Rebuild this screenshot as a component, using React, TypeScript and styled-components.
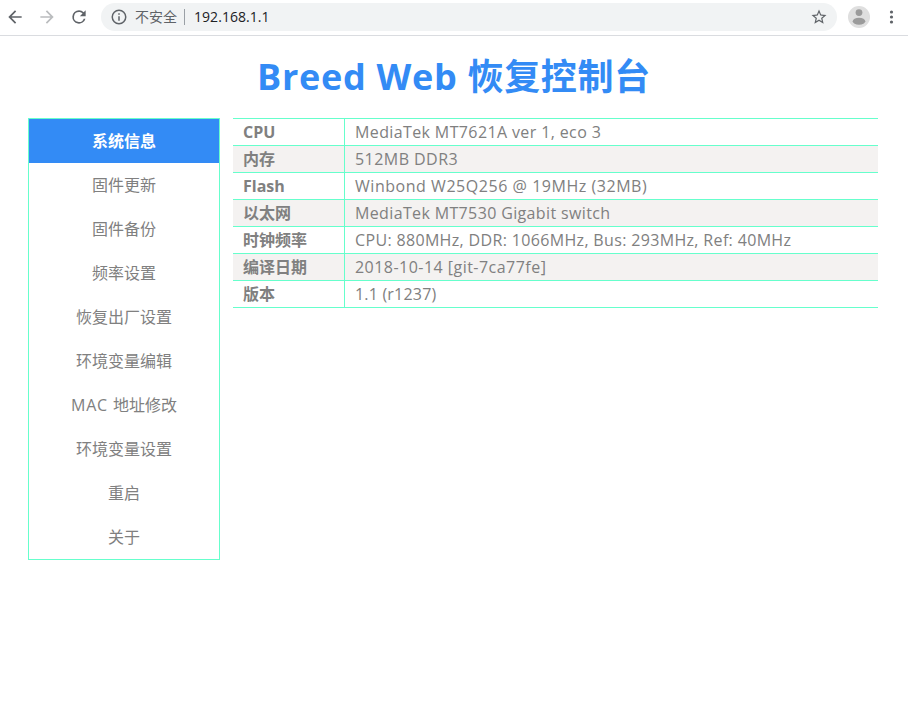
import React from "react";
import styled, { createGlobalStyle } from "styled-components";

const GlobalStyle = createGlobalStyle`
  * { box-sizing: border-box; }
  body {
    margin: 0;
    background: #fff;
    color: #808080;
    font-family: "Open Sans", "Noto Sans CJK SC", sans-serif;
    font-size: 16px;
  }
`;

const Page = styled.div`
  height: 721px;
  overflow: hidden;
`;

const Toolbar = styled.header`
  display: flex;
  align-items: center;
  height: 36px;
  padding: 0 8px 2px 5px;
  border-bottom: 1px solid #dadce0;
`;

const NavButton = styled.button<{ $muted?: boolean }>`
  display: flex;
  width: 20px;
  height: 20px;
  margin-right: 12px;
  padding: 0;
  border: 0;
  background: none;
  color: ${(p) => (p.$muted ? "#babcbe" : "#5f6368")};
`;

const AddressBar = styled.div`
  display: flex;
  align-items: center;
  flex: 1;
  height: 28px;
  padding: 0 9px 0 9px;
  border-radius: 14px;
  background: #f1f3f4;
  font-size: 14px;
  color: #5f6368;
`;

const Security = styled.span`
  width: 42px;
  margin-left: 7px;
  line-height: 20px;
`;

const Divider = styled.span`
  width: 1px;
  height: 16px;
  margin: 0 9px 0 7px;
  background: #9aa0a6;
`;

const Address = styled.span`
  flex: 1;
  color: #202124;
  line-height: 20px;
  letter-spacing: 0.05px;
`;

const Profile = styled.svg`
  margin: 0 12px 0 11px;
`;

const Title = styled.h1`
  margin: 0;
  height: 82px;
  padding-top: 9px;
  text-align: center;
  color: #338bf5;
  font-size: 36px;
  line-height: 64px;
  font-weight: 700;
  letter-spacing: 0.7px;
`;

const Content = styled.main`
  display: flex;
  align-items: flex-start;
  gap: 13px;
  padding: 0 30px 0 28px;
`;

const Menu = styled.nav`
  display: flex;
  flex-direction: column;
  width: 192px;
  border: 1px solid #66ffcc;
`;

const MenuItem = styled.a<{ $active?: boolean }>`
  height: 44px;
  line-height: 44px;
  text-align: center;
  background: ${(p) => (p.$active ? "#338bf5" : "transparent")};
  color: ${(p) => (p.$active ? "#fff" : "inherit")};
  font-weight: ${(p) => (p.$active ? 700 : 400)};
`;

const Acronym = styled.span`
  letter-spacing: 0.8px;
`;

const InfoTable = styled.div`
  flex: 1;
  border-top: 1px solid #66ffcc;
`;

const Row = styled.div`
  display: grid;
  grid-template-columns: 112px 1fr;
  height: 27px;
  border-bottom: 1px solid #66ffcc;
  line-height: 26px;
  white-space: nowrap;
  &:nth-child(even) { background: #f4f2f1; }
`;

const Label = styled.div`
  padding-left: 10px;
  border-right: 1px solid #66ffcc;
  font-weight: 700;
`;

const Value = styled.div<{ $tracking: number }>`
  padding-left: 10px;
  letter-spacing: ${(p) => p.$tracking}px;
`;

const menu: { id: string; label: React.ReactNode }[] = [
  { id: "info", label: "系统信息" },
  { id: "upgrade", label: "固件更新" },
  { id: "backup", label: "固件备份" },
  { id: "frequency", label: "频率设置" },
  { id: "reset", label: "恢复出厂设置" },
  { id: "env-edit", label: "环境变量编辑" },
  { id: "mac", label: <><Acronym>MAC </Acronym>地址修改</> },
  { id: "env-settings", label: "环境变量设置" },
  { id: "reboot", label: "重启" },
  { id: "about", label: "关于" },
];

const rows: { label: string; value: string; tracking: number }[] = [
  { label: "CPU", value: "MediaTek MT7621A ver 1, eco 3", tracking: 0.38 },
  { label: "内存", value: "512MB DDR3", tracking: 0.45 },
  { label: "Flash", value: "Winbond W25Q256 @ 19MHz (32MB)", tracking: 0.54 },
  { label: "以太网", value: "MediaTek MT7530 Gigabit switch", tracking: 0.36 },
  { label: "时钟频率", value: "CPU: 880MHz, DDR: 1066MHz, Bus: 293MHz, Ref: 40MHz", tracking: 0.34 },
  { label: "编译日期", value: "2018-10-14 [git-7ca77fe]", tracking: 0.47 },
  { label: "版本", value: "1.1 (r1237)", tracking: 0.2 },
];

const Glyph = ({ d, size = 20 }: { d: string; size?: number }) => (
  <svg width={size} height={size} viewBox="0 0 24 24" fill="currentColor">
    <path d={d} />
  </svg>
);

export default function App() {
  return (
    <Page>
      <GlobalStyle />
      <Toolbar>
        <NavButton aria-label="Back">
          <Glyph d="M20 11H7.83l5.59-5.59L12 4l-8 8 8 8 1.41-1.41L7.83 13H20v-2z" />
        </NavButton>
        <NavButton aria-label="Forward" $muted>
          <Glyph d="M12 4l-1.41 1.41L16.17 11H4v2h12.17l-5.58 5.59L12 20l8-8z" />
        </NavButton>
        <NavButton aria-label="Reload">
          <Glyph d="M17.65 6.35A7.96 7.96 0 0 0 12 4a8 8 0 1 0 7.73 10h-2.08A6 6 0 1 1 12 6c1.66 0 3.14.69 4.22 1.78L13 11h7V4l-2.35 2.35z" />
        </NavButton>
        <AddressBar>
          <Glyph size={18} d="M11 17h2v-6h-2v6zm1-15a10 10 0 1 0 0 20 10 10 0 0 0 0-20zm0 18a8 8 0 1 1 0-16 8 8 0 0 1 0 16zM11 9h2V7h-2v2z" />
          <Security>不安全</Security>
          <Divider />
          <Address>192.168.1.1</Address>
          <Glyph size={18} d="M22 9.24l-7.19-.62L12 2 9.19 8.63 2 9.24l5.46 4.73L5.82 21 12 17.27 18.18 21l-1.63-7.03L22 9.24zM12 15.4l-3.76 2.27 1-4.28-3.32-2.88 4.38-.38L12 6.1l1.71 4.04 4.38.38-3.32 2.88 1 4.28L12 15.4z" />
        </AddressBar>
        <Profile width="22" height="22" viewBox="0 0 22 22">
          <circle cx="11" cy="11" r="11" fill="#dfdfdf" />
          <circle cx="11" cy="6.6" r="3.4" fill="#9b9b9b" />
          <ellipse cx="11" cy="15.2" rx="6.3" ry="3.5" fill="#9b9b9b" />
        </Profile>
        <svg width="18" height="18" viewBox="0 0 18 18" fill="#5f6368">
          <circle cx="9.5" cy="4" r="1.6" />
          <circle cx="9.5" cy="9" r="1.6" />
          <circle cx="9.5" cy="14" r="1.6" />
        </svg>
      </Toolbar>
      <Title>Breed Web 恢复控制台</Title>
      <Content>
        <Menu>
          {menu.map((item, i) => (
            <MenuItem key={item.id} $active={i === 0}>{item.label}</MenuItem>
          ))}
        </Menu>
        <InfoTable>
          {rows.map((r) => (
            <Row key={r.label}>
              <Label>{r.label}</Label>
              <Value $tracking={r.tracking}>{r.value}</Value>
            </Row>
          ))}
        </InfoTable>
      </Content>
    </Page>
  );
}
